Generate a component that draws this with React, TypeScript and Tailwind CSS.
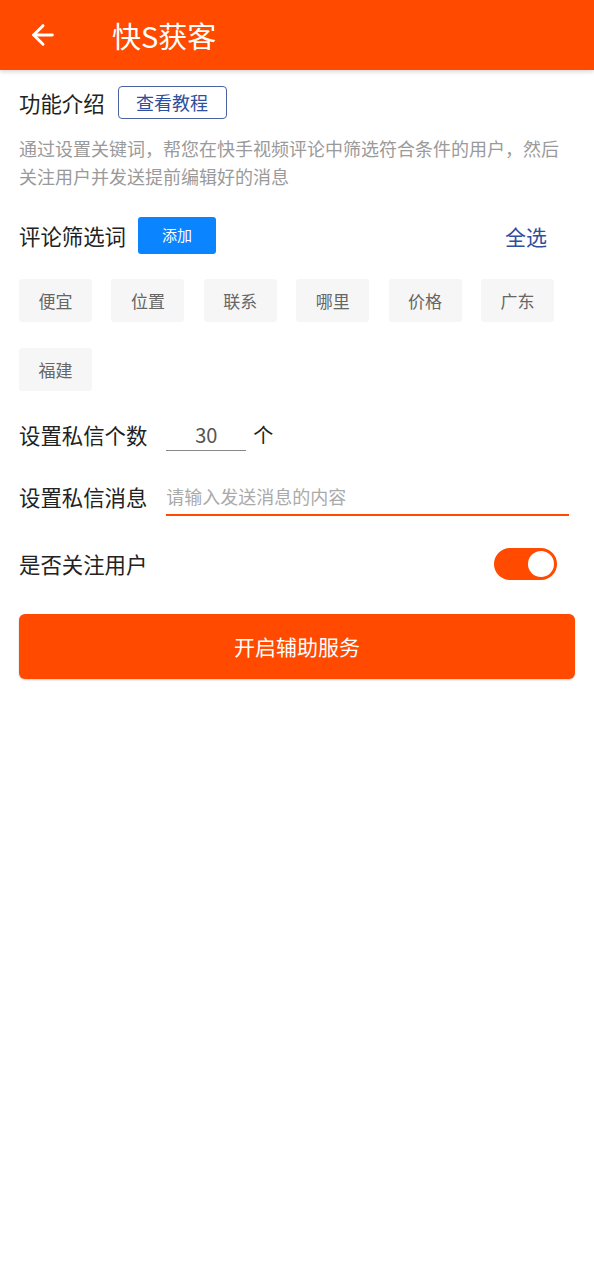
import { ArrowLeft } from "lucide-react";

const words = ["便宜", "位置", "联系", "哪里", "价格", "广东", "福建"];

const font = { fontFamily: '"Noto Sans CJK SC", "Noto Sans", sans-serif' };

export default function App() {
  return (
    <div className="min-h-[1280px] w-[594px] bg-white text-[#222]" style={font}>
      {/* header */}
      <div className="flex h-[70px] items-center bg-[#ff4a00] shadow-[0_2px_4px_rgba(0,0,0,0.15)]">
        <ArrowLeft className="ml-[27px] h-[32px] w-[32px] text-white" strokeWidth={2.2} />
        <span className="ml-[53px] text-[29px] leading-none text-white">快S获客</span>
      </div>

      <div className="px-[19px]">
        {/* intro */}
        <div className="mt-[16px] flex items-center gap-[13px]">
          <span className="text-[21.4px] leading-[28px]">功能介绍</span>
          <button className="flex h-[33px] w-[109px] items-center justify-center rounded-[4px] border border-[#4a639e] text-[18px] text-[#2f4f9c]">
            查看教程
          </button>
        </div>
        <p className="mt-[15px] text-[18px] leading-[28px] text-[#9a9a9a]">
          通过设置关键词，帮您在快手视频评论中筛选符合条件的用户，然后关注用户并发送提前编辑好的消息
        </p>

        {/* filter words */}
        <div className="mt-[27px] flex items-center">
          <span className="text-[21.4px] leading-[28px]">评论筛选词</span>
          <button className="ml-[12px] flex h-[37px] w-[78px] items-center justify-center rounded-[3px] bg-[#0a84ff] text-[15px] text-white">
            添加
          </button>
          <span className="ml-auto mr-[28px] text-[21px] leading-[28px] text-[#2f4f9c]">全选</span>
        </div>

        <div className="mt-[25px] flex flex-wrap gap-x-[19.4px] gap-y-[26px]">
          {words.map((w) => (
            <div
              key={w}
              className="flex h-[43px] w-[73px] items-center justify-center rounded-[3px] bg-[#f6f6f6] text-[17px] text-[#666]"
            >
              {w}
            </div>
          ))}
        </div>

        {/* count */}
        <div className="mt-[28px] flex items-center">
          <span className="text-[21.4px] leading-[28px]">设置私信个数</span>
          <div className="ml-[19px] flex h-[32px] w-[80px] items-center justify-center border-b border-[#888] text-[20px] text-[#555]">
            30
          </div>
          <span className="ml-[7px] text-[20px]">个</span>
        </div>

        {/* message */}
        <div className="mt-[27px] flex items-center">
          <span className="text-[21.4px] leading-[28px]">设置私信消息</span>
          <div className="ml-[19px] flex h-[38px] flex-1 items-center border-b-[2.5px] border-[#ff4a00]">
            <span className="text-[18px] text-[#aaa]">请输入发送消息的内容</span>
          </div>
          <div className="w-[6px]" />
        </div>

        {/* follow */}
        <div className="mt-[32px] flex items-center">
          <span className="text-[21.4px] leading-[28px]">是否关注用户</span>
          <div className="ml-auto mr-[18px] flex h-[32px] w-[63px] items-center justify-end rounded-full bg-[#ff4a00] pr-[3px]">
            <div className="h-[26px] w-[26px] rounded-full bg-white" />
          </div>
        </div>

        <button className="mt-[34px] flex h-[65px] w-full items-center justify-center rounded-[6px] bg-[#ff4a00] text-[21px] text-white shadow-[0_1px_2px_rgba(0,0,0,0.2)]">
          开启辅助服务
        </button>
      </div>
    </div>
  );
}
